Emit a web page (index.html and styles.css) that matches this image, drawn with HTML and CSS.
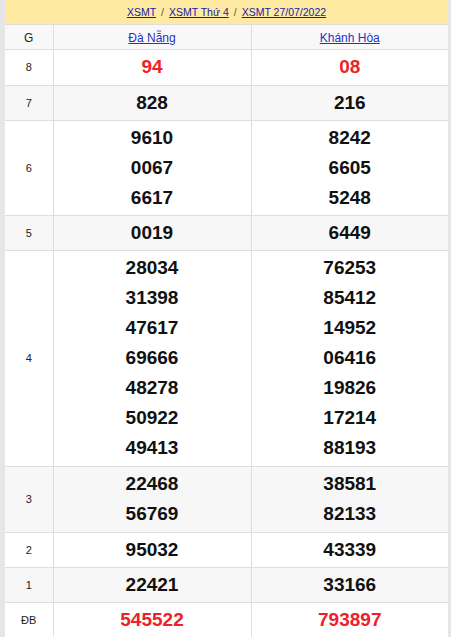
FILE: index.html
```html
<!DOCTYPE html>
<html lang="vi">
<head>
<meta charset="utf-8">
<link rel="stylesheet" href="styles.css">
</head>
<body>
<div class="frame">
  <div class="crumb">
    <a href="#">XSMT</a><span class="sep">/</span><a href="#">XSMT Thứ 4</a><span class="sep">/</span><a href="#">XSMT 27/07/2022</a>
  </div>
  <table class="kq">
    <colgroup><col class="c0"><col class="c1"><col class="c2"></colgroup>
    <tr class="head"><td class="g">G</td><td><a href="#">Đà Nẵng</a></td><td><a href="#">Khánh Hòa</a></td></tr>
    <tr class="tall"><td class="g">8</td><td class="n red">94</td><td class="n red">08</td></tr>
    <tr class="alt"><td class="g">7</td><td class="n">828</td><td class="n">216</td></tr>
    <tr><td class="g">6</td><td class="n"><div>9610</div><div>0067</div><div>6617</div></td><td class="n"><div>8242</div><div>6605</div><div>5248</div></td></tr>
    <tr class="alt"><td class="g">5</td><td class="n">0019</td><td class="n">6449</td></tr>
    <tr class="tall"><td class="g">4</td><td class="n"><div>28034</div><div>31398</div><div>47617</div><div>69666</div><div>48278</div><div>50922</div><div>49413</div></td><td class="n"><div>76253</div><div>85412</div><div>14952</div><div>06416</div><div>19826</div><div>17214</div><div>88193</div></td></tr>
    <tr class="alt tall"><td class="g">3</td><td class="n"><div>22468</div><div>56769</div></td><td class="n"><div>38581</div><div>82133</div></td></tr>
    <tr><td class="g">2</td><td class="n">95032</td><td class="n">43339</td></tr>
    <tr class="alt"><td class="g">1</td><td class="n">22421</td><td class="n">33166</td></tr>
    <tr><td class="g">ĐB</td><td class="n red">545522</td><td class="n red">793897</td></tr>
  </table>
</div>
</body>
</html>
```
FILE: styles.css
```css
html, body { margin: 0; padding: 0; background: #fff; }
body { font-family: "Liberation Sans", Arial, sans-serif; }
.frame {
  border-left: 5px solid #e6e6e6;
  border-right: 3px solid #e6e6e6;
  width: 443px;
}
.crumb {
  background: #feeaa0;
  height: 24px;
  line-height: 24px;
  text-align: center;
  font-size: 10.5px;
  color: #333;
}
.crumb a { color: #1a1aa6; text-decoration: underline; }
.crumb .sep { color: #555; margin: 0 5px; }
.kq {
  width: 443px;
  border-collapse: collapse;
  table-layout: fixed;
}
.c0 { width: 48px; }
.c1 { width: 198px; }
.kq td {
  border-top: 1px solid #dedede;
  border-left: 1px solid #dedede;
  text-align: center;
  vertical-align: middle;
  padding: 2px 0;
}
.kq td:first-child { border-left: none; }
.kq tr.head td {
  background: #f8f8f8;
  height: 21px;
  font-size: 12px;
  padding: 2px 0 1px;
}
.kq tr.head a { color: #2432c8; text-decoration: underline; }
.kq tr.alt td { background: #f7f7f7; }
.kq tr.tall td { padding: 2px 0 3px; }
.kq td.g { font-size: 11px; color: #222; }
.kq tr.head td.g { font-size: 12px; }
.kq td.n {
  font-size: 19px;
  font-weight: bold;
  line-height: 30px;
  color: #111;
}
.kq td.red { color: #ee2128; }
```
